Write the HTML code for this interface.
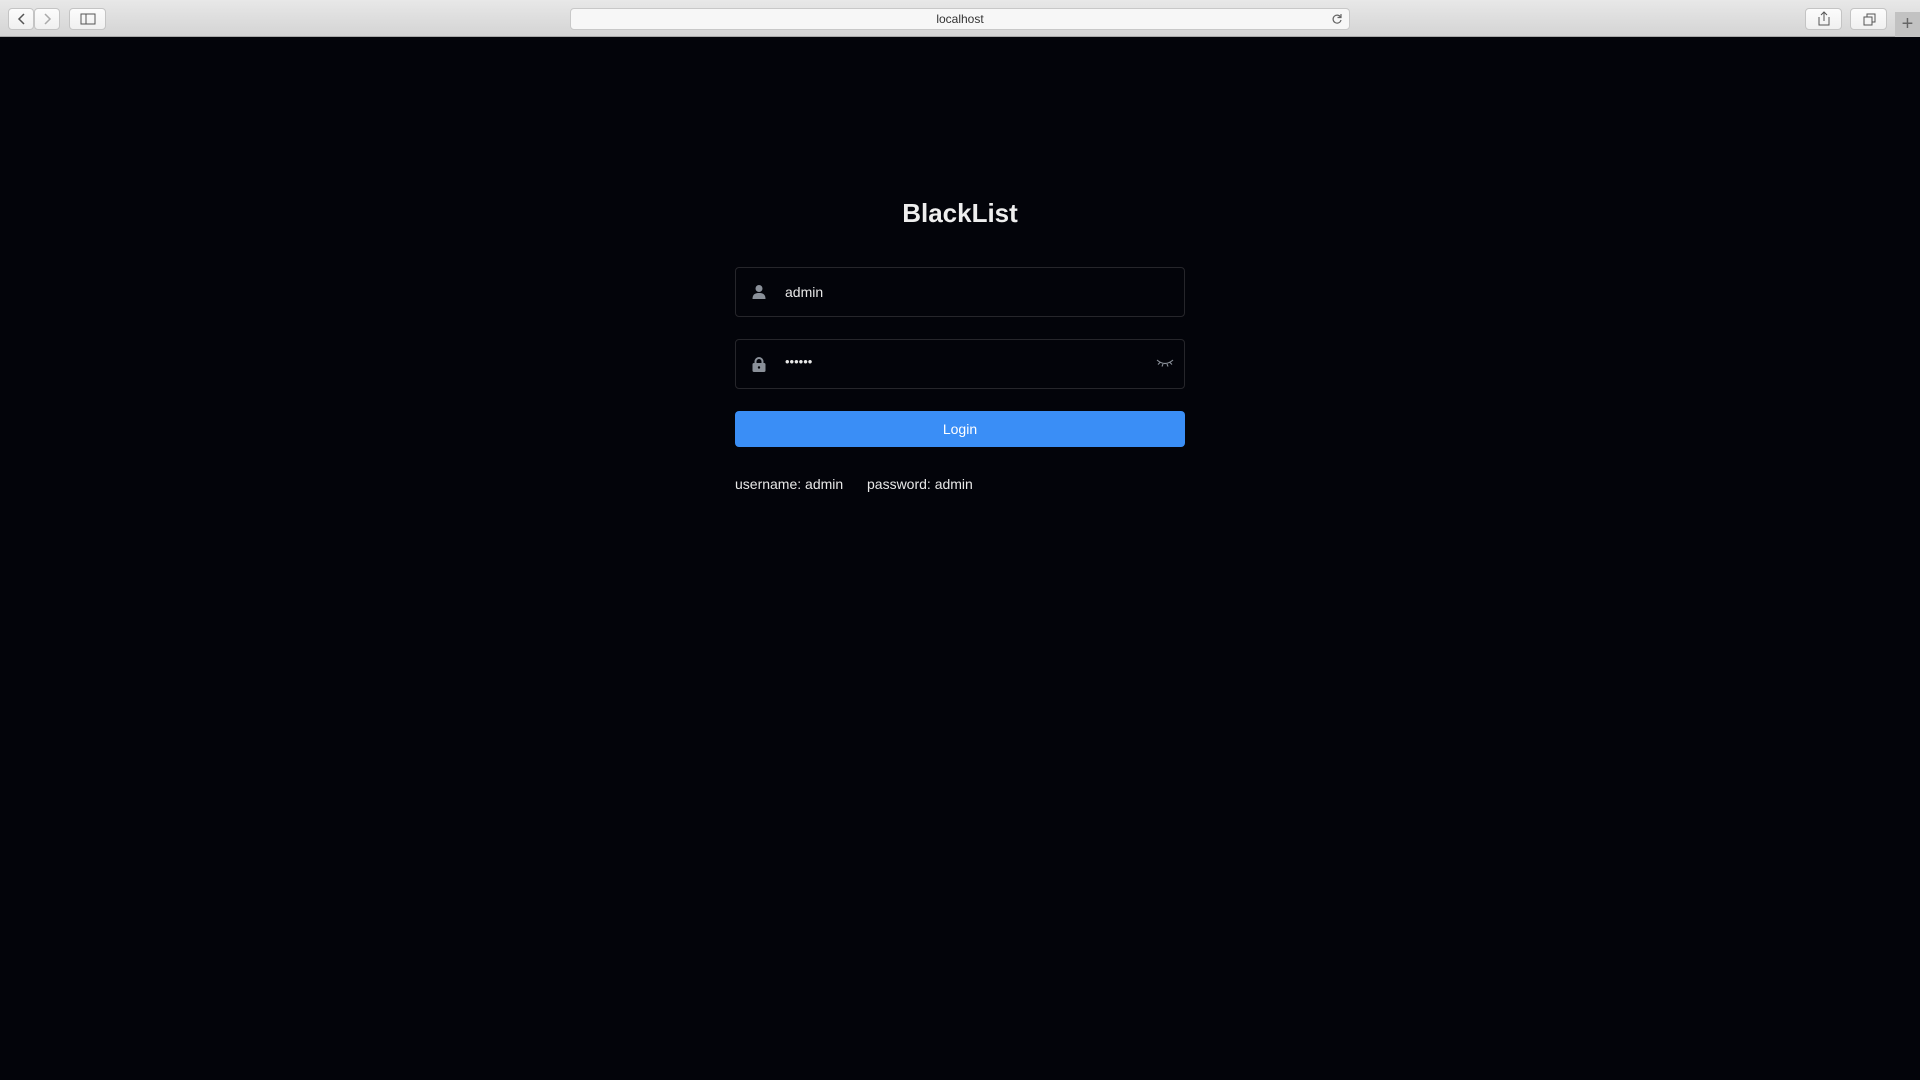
<!DOCTYPE html>
<html><head><meta charset="utf-8"><style>
*{box-sizing:border-box;margin:0;padding:0}
body{width:1920px;height:1080px;background:#03040a;font-family:"Liberation Sans",sans-serif;position:relative;overflow:hidden}
.tb{position:absolute;left:0;top:0;width:1920px;height:37px;background:linear-gradient(#e8e8e8,#d4d4d4);border-bottom:1px solid #a8a8a8}
.b{position:absolute;top:8px;height:22px;background:linear-gradient(#fcfcfc,#f0f0f0);border:1px solid #c4c4c4;border-radius:4px}
.url{position:absolute;left:570px;top:8px;width:780px;height:22px;background:#f7f7f7;border:1px solid #c8c8c8;border-radius:4px;font-size:12px;color:#333;text-align:center;line-height:21px}
.inp{position:absolute;left:735px;width:450px;height:50px;border:1px solid #26262b;border-radius:4px}
.inp span{position:absolute;left:49px;top:0;line-height:48px;font-size:14px;color:#e8e8e8}
</style></head><body>
<div class="tb">
<div class="b" style="left:8px;width:26px"><svg width="24" height="20"><path d="M15 5l-5 5 5 5" stroke="#555" stroke-width="1.5" fill="none"/></svg></div>
<div class="b" style="left:34px;width:26px"><svg width="24" height="20"><path d="M10 5l5 5-5 5" stroke="#aaa" stroke-width="1.5" fill="none"/></svg></div>
<div class="b" style="left:69px;width:37px"><svg width="35" height="20"><rect x="11" y="5" width="14" height="10" stroke="#555" fill="none"/><line x1="16" y1="5" x2="16" y2="15" stroke="#555"/></svg></div>
<div class="url">localhost<svg style="position:absolute;right:6px;top:4px" width="12" height="12"><path d="M9.5 4A4 4 0 1 0 10 7" stroke="#666" fill="none" stroke-width="1.2"/><path d="M10 1v3.5H6.5" stroke="#666" fill="none" stroke-width="1.2"/></svg></div>
<div class="b" style="left:1805px;width:37px"><svg width="35" height="20"><path d="M13 8v8h10V8M18 3v9M15 6l3-3 3 3" stroke="#555" fill="none"/></svg></div>
<div class="b" style="left:1850px;width:37px"><svg width="35" height="20"><rect x="13" y="8" width="8" height="8" stroke="#555" fill="none"/><path d="M16 8V5h8v8h-3" stroke="#555" fill="none"/></svg></div>
<div style="position:absolute;left:1895px;top:12px;width:25px;height:25px;background:#c2c2c2;color:#666;font-size:20px;text-align:center;line-height:25px">+</div>
</div>
<div style="position:absolute;left:0;width:1920px;top:198px;text-align:center;color:#eee;font-size:26px;font-weight:bold">BlackList</div>
<div class="inp" style="top:267px"><svg style="position:absolute;left:15px;top:16px" width="16" height="16"><circle cx="8" cy="4.5" r="3.5" fill="#8a9099"/><path d="M1.5 15c0-5 3-6 6.5-6s6.5 1 6.5 6z" fill="#8a9099"/></svg><span>admin</span></div>
<div class="inp" style="top:339px"><svg style="position:absolute;left:15px;top:16px" width="16" height="16"><path d="M4.5 8V5.5a3.5 3.5 0 0 1 7 0V8" stroke="#8a9099" stroke-width="2" fill="none"/><rect x="1.5" y="7" width="13" height="9" rx="1.5" fill="#8a9099"/><circle cx="8" cy="11.5" r="1.2" fill="#03040a"/></svg><span style="letter-spacing:0;font-size:13px;top:-2px">••••••</span>
<svg style="position:absolute;left:420px;top:17px" width="18" height="12"><path d="M1 3q8 7 16 0M4 5.5l-2 2M14 5.5l2 2M7 7l-1 2.5M11 7l1 2.5" stroke="#8a9099" fill="none" stroke-width="1.1"/></svg></div>
<div style="position:absolute;left:735px;top:411px;width:450px;height:36px;background:#3a8ef6;border-radius:4px;color:#fff;font-size:14px;text-align:center;line-height:36px">Login</div>
<div style="position:absolute;left:735px;top:476px;color:#e8e8e8;font-size:14px">username: admin</div>
<div style="position:absolute;left:867px;top:476px;color:#e8e8e8;font-size:14px">password: admin</div>
</body></html>
